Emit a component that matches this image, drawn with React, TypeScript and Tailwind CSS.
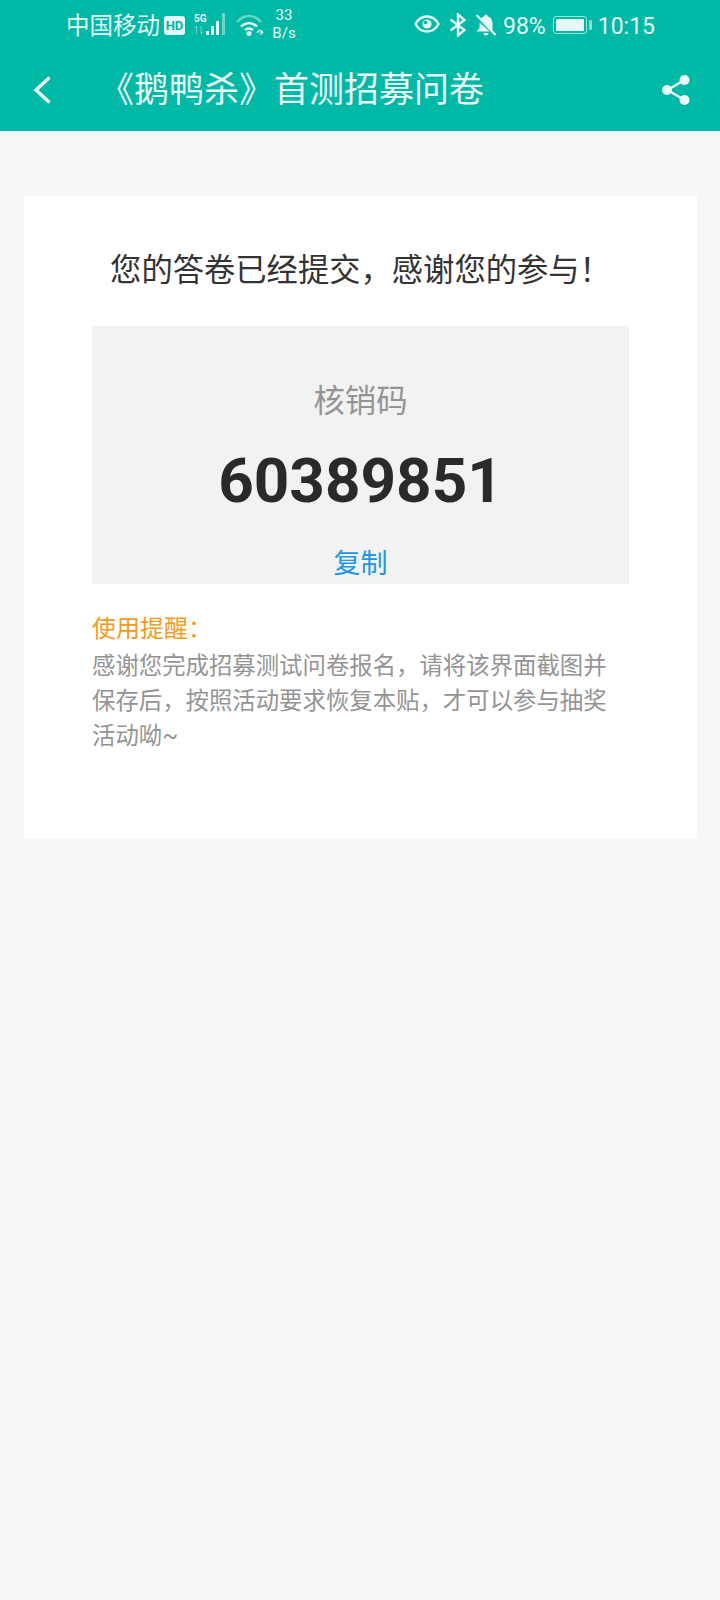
const cjk = "font-['Roboto','Noto_Sans_CJK_SC',sans-serif]";

function StatusBar() {
  return (
    <div className="flex h-[50px] items-center justify-between pl-[66px] pr-[65px] text-[#e6f8f5]">
      <div className="flex items-center">
        <span className="mt-[3px] text-[23.5px] leading-none">中国移动</span>
        <span className="ml-[4px] flex h-[19px] w-[21px] items-center justify-center rounded-[3px] bg-[#e6f8f5] text-[13px] font-bold leading-none text-[#00b8a6]">
          HD
        </span>
        {/* signal */}
        <svg className="ml-[9px]" width="35" height="24" viewBox="0 0 35 24">
          <text x="0" y="9" fontSize="10" fontWeight="700" fill="#e6f8f5">5G</text>
          <path d="M2.500 13v8M.5 15l2-2M7 13v8l2-2" stroke="#e6f8f5" strokeOpacity="0.45" fill="none" />
          <rect x="12" y="18" width="3" height="4" fill="#e6f8f5" />
          <rect x="17" y="13" width="3" height="9" fill="#e6f8f5" />
          <rect x="22" y="8" width="3" height="14" fill="#e6f8f5" />
          <rect x="28" y="0" width="3" height="22" fill="#e6f8f5" fillOpacity="0.45" />
        </svg>
        {/* wifi */}
        <svg className="ml-[7px]" width="28" height="24" viewBox="0 0 28 24" fill="none">
          <path d="M1 9c7-8 17-8 24 0" stroke="#e6f8f5" strokeOpacity="0.45" strokeWidth="2.500" />
          <path d="M5 13.500c5-4.500 11-4.500 16 0" stroke="#e6f8f5" strokeWidth="2.500" />
          <path d="M9 17c2.700-2 5.300-2 8 0" stroke="#e6f8f5" strokeWidth="2.500" />
          <circle cx="13" cy="20.500" r="2.500" fill="#e6f8f5" />
          <path d="M20 19.500h3.500v-3.500zM24.500 16v6.500l3-3.200z" fill="#e6f8f5" />
        </svg>
        <div className="-mt-[2px] ml-[8px] flex w-[24px] flex-col items-center text-[15px] leading-[18px]">
          <span>33</span>
          <span>B/s</span>
        </div>
      </div>
      <div className="flex items-center">
        {/* eye */}
        <svg className="-mt-[2px]" width="26" height="20" viewBox="0 0 26 20" fill="none">
          <path d="M1.500 10C4.500 4.500 8.500 2.500 13 2.500s8.500 2 11.500 7.500c-3 5.500-7 7.500-11.500 7.500S4.500 15.500 1.500 10Z" stroke="#e6f8f5" strokeWidth="2.400" />
          <circle cx="13" cy="10" r="4.600" fill="#e6f8f5" />
          <circle cx="11.500" cy="8.500" r="1.800" fill="#00b8a6" />
        </svg>
        {/* bluetooth */}
        <svg className="ml-[9px]" width="18" height="24" viewBox="0 0 18 24" fill="none">
          <path d="M1.500 6.500 15.500 17 9 22.500v-21L15.500 7 1.500 17.500" stroke="#e6f8f5" strokeWidth="2.400" />
        </svg>
        {/* muted bell */}
        <svg className="ml-[8px]" width="22" height="24" viewBox="0 0 22 24">
          <path d="M11 1.500c-1 0-1.700.7-1.700 1.800C7.800 3.800 6.500 4.700 5.800 6l11.700 12.500V11c0-3.800-1.800-6.800-4.800-7.700 0-1.100-.7-1.800-1.700-1.800ZM4.600 9.500 4.500 15 1.500 18.500h13.200Z" fill="#e6f8f5" />
          <path d="M8.500 20h5a2.500 2.500 0 0 1-5 0Z" fill="#e6f8f5" />
          <path d="M1.500 2 20.500 22" stroke="#e6f8f5" strokeWidth="2.200" />
        </svg>
        <span className="ml-[6px] mt-[3px] text-[23px] leading-none">98%</span>
        {/* battery */}
        <div className="ml-[7px] flex items-center">
          <div className="h-[18px] w-[34px] rounded-[3px] border border-[#e6f8f5]/70 p-[2px]">
            <div className="h-full w-full rounded-[1px] bg-[#e6f8f5]" />
          </div>
          <div className="ml-[2px] h-[10px] w-[3px] rounded-[1px] bg-[#e6f8f5]/60" />
        </div>
        <span className="ml-[6px] mt-[3px] text-[23px] leading-none">10:15</span>
      </div>
    </div>
  );
}

function TitleBar() {
  return (
    <div className="flex h-[81px] items-center pb-[1px] pl-[33px] pr-[29px] text-[#eafaf7]">
      <svg className="shrink-0" width="18" height="28" viewBox="0 0 18 28" fill="none">
        <path d="M16.500 1.500 3 14l13.500 12.500" stroke="#eafaf7" strokeWidth="3.400" />
      </svg>
      <h1 className="ml-[48px] flex-1 text-[35px] leading-none">《鹅鸭杀》首测招募问卷</h1>
      <svg width="30" height="32" viewBox="0 0 30 32" fill="none">
        <path d="M23.500 6 6.500 16l17 10" stroke="#eafaf7" strokeWidth="2.600" />
        <circle cx="23.500" cy="6" r="5" fill="#eafaf7" />
        <circle cx="6" cy="16" r="5" fill="#eafaf7" />
        <circle cx="23.500" cy="26" r="5" fill="#eafaf7" />
      </svg>
    </div>
  );
}

export default function App() {
  return (
    <div className={`flex min-h-[1600px] flex-col bg-[#f7f7f7] ${cjk}`}>
      <header className="bg-[#00b8a6]">
        <StatusBar />
        <TitleBar />
      </header>

      <main className="ml-6 mt-[65px] h-[643px] w-[673px] bg-white px-[68px] pt-[55px]">
        <p className="text-center text-[31.300px] leading-[40px] text-[#333333]">
          您的答卷已经提交，感谢您的参与！
        </p>

        <div className="mt-[35px] flex h-[258px] flex-col items-center bg-[#f2f2f2] pt-[58px]">
          <span className="text-[31.400px] leading-[36px] text-[#949494]">核销码</span>
          <span className="mt-[25px] text-[62px] font-bold leading-[72px] text-[#2a2a2a]">60389851</span>
          <span className="mt-[31px] text-[27px] leading-[32px] text-[#2196e3]">复制</span>
        </div>

        <p className="mt-[29px] text-[24px] leading-[32px] text-[#f29b1d]">使用提醒：</p>
        <p className="mt-[4px] text-[23.400px] leading-[35px] text-[#949494]">
          感谢您完成招募测试问卷报名，请将该界面截图并保存后，按照活动要求恢复本贴，才可以参与抽奖活动呦~
        </p>
      </main>
    </div>
  );
}
